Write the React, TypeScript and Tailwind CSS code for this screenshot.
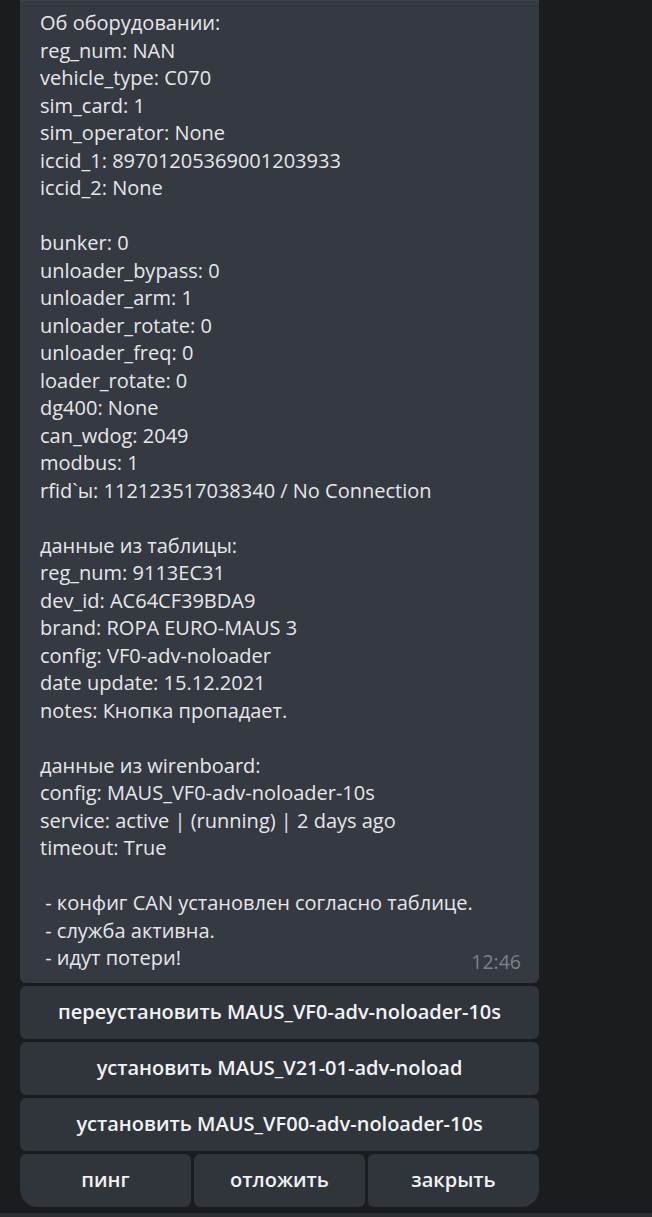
import React from 'react';

const LINES: string[] = [
  'Об оборудовании:',
  'reg_num: NAN',
  'vehicle_type: C070',
  'sim_card: 1',
  'sim_operator: None',
  'iccid_1: 89701205369001203933',
  'iccid_2: None',
  '',
  'bunker: 0',
  'unloader_bypass: 0',
  'unloader_arm: 1',
  'unloader_rotate: 0',
  'unloader_freq: 0',
  'loader_rotate: 0',
  'dg400: None',
  'can_wdog: 2049',
  'modbus: 1',
  'rfid`ы: 112123517038340 / No Connection',
  '',
  'данные из таблицы:',
  'reg_num: 9113EC31',
  'dev_id: AC64CF39BDA9',
  'brand: ROPA EURO-MAUS 3',
  'config: VF0-adv-noloader',
  'date update: 15.12.2021',
  'notes: Кнопка пропадает.',
  '',
  'данные из wirenboard:',
  'config: MAUS_VF0-adv-noloader-10s',
  'service: active | (running) | 2 days ago',
  'timeout: True',
  '',
  ' - конфиг CAN установлен согласно таблице.',
  ' - служба активна.',
  ' - идут потери!',
];

const WIDE_BUTTONS = [
  'переустановить MAUS_VF0-adv-noloader-10s',
  'установить MAUS_V21-01-adv-noload',
  'установить MAUS_VF00-adv-noloader-10s',
];

export default function App() {
  return (
    <div
      className="w-[652px] h-[1217px] overflow-hidden bg-[#1b1c1f] flex flex-col"
      style={{ fontFamily: '"Open Sans", "Noto Sans", sans-serif' }}
    >
      <div className="flex-1 pl-[20px]">
        <div className="w-[519px] flex flex-col gap-[3px]">
          {/* Message bubble */}
          <div className="relative bg-[#353941] rounded-b-[6px] pt-[8px] pb-[11px] px-[20px] border-t border-[#3d4149]">
            {LINES.map((line, i) => (
              <div
                key={i}
                className="text-[20px] leading-[27.5px] text-[#e6e7e9] whitespace-pre h-[27.5px]"
              >
                {line}
              </div>
            ))}
            <span className="absolute right-[18px] bottom-[7px] text-[19.5px] leading-[27.5px] text-[#7c818a]">
              12:46
            </span>
          </div>

          {/* Inline keyboard */}
          {WIDE_BUTTONS.map((label) => (
            <button
              key={label}
              className="h-[53px] w-full rounded-[6px] bg-[#30343b] text-[#f1f2f4] text-[20px] font-semibold flex items-center justify-center"
            >
              {label}
            </button>
          ))}
          <div className="grid grid-cols-3 gap-[3px]">
            <button className="h-[53px] rounded-[6px] rounded-bl-[18px] bg-[#30343b] text-[#f1f2f4] text-[20px] font-semibold">
              пинг
            </button>
            <button className="h-[53px] rounded-[6px] bg-[#30343b] text-[#f1f2f4] text-[20px] font-semibold">
              отложить
            </button>
            <button className="h-[53px] rounded-[6px] rounded-br-[18px] bg-[#30343b] text-[#f1f2f4] text-[20px] font-semibold">
              закрыть
            </button>
          </div>
        </div>
      </div>
      <div className="h-[4px] bg-[#2b2e33]" />
    </div>
  );
}
